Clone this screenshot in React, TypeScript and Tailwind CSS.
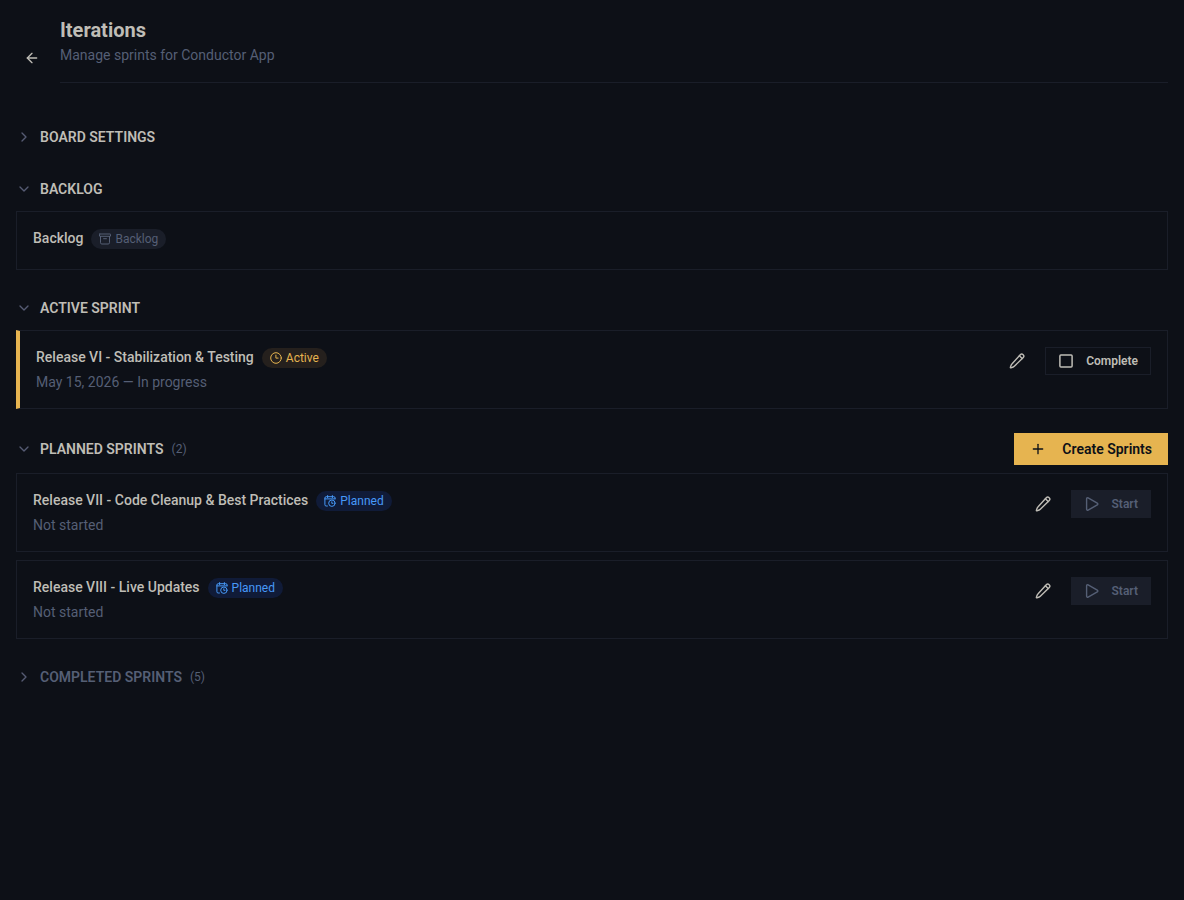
import { useState, type ReactNode } from 'react';
import { ArrowLeft, ChevronDown, ChevronRight, Plus } from 'lucide-react';

const stroke = { fill: 'none', stroke: 'currentColor', strokeLinecap: 'round', strokeLinejoin: 'round' } as const;

function PencilIcon() {
  return (
    <svg viewBox="0 0 16 16" className="size-4" {...stroke} strokeWidth={1.4} aria-hidden="true">
      <path d="M11.5 1.6a1.7 1.7 0 0 1 2.4 0l.4.4a1.7 1.7 0 0 1 0 2.4l-9 8.9a3 3 0 0 1-1.1.7l-2.3.8a.4.4 0 0 1-.5-.5l.8-2.3a3 3 0 0 1 .7-1.1z" />
      <path d="m10.4 2.8 2.8 2.8" />
    </svg>
  );
}

function SquareIcon() {
  return (
    <svg viewBox="0 0 16 16" className="size-4" {...stroke} strokeWidth={1.5} aria-hidden="true">
      <rect x="1.9" y="1.9" width="12.2" height="12.2" rx="1" />
    </svg>
  );
}

function PlayIcon() {
  return (
    <svg viewBox="0 0 16 16" className="size-4" {...stroke} strokeWidth={1.4} aria-hidden="true">
      <path d="M2.6 2.7c0-.8.8-1.2 1.5-.9l9.2 5.3c.7.4.7 1.4 0 1.8l-9.2 5.3c-.7.3-1.5-.1-1.5-.9z" />
    </svg>
  );
}

function ArchiveIcon() {
  return (
    <svg viewBox="0 0 12 12" className="size-3" {...stroke} strokeWidth={1} aria-hidden="true">
      <rect x=".5" y="1" width="11" height="2.3" rx=".3" />
      <path d="M1.5 3.4v6.3c0 .8.5 1.3 1.3 1.3h6.4c.8 0 1.3-.5 1.3-1.3V3.4M4.6 5.7h2.8" />
    </svg>
  );
}

function ClockIcon() {
  return (
    <svg viewBox="0 0 12 12" className="size-3" {...stroke} strokeWidth={1} aria-hidden="true">
      <circle cx="6" cy="6" r="5.3" />
      <path d="M5.9 3.1v3h2.2" />
    </svg>
  );
}

function CalendarClockIcon() {
  return (
    <svg viewBox="0 0 12 12" className="size-3" {...stroke} strokeWidth={1} aria-hidden="true">
      <path d="M3.6.6v2M8.4.6v2M3.4 11H2.2A1.3 1.3 0 0 1 .9 9.7V3a1.3 1.3 0 0 1 1.3-1.3h7.6A1.3 1.3 0 0 1 11.1 3v.8M.9 3.9h10.2" />
      <circle cx="7.9" cy="8.2" r="3.2" />
      <path d="M7.8 6.8v1.5H9" />
    </svg>
  );
}

const badgeStyles = {
  backlog: 'bg-[#1a1e29] text-[#555f75]',
  active: 'bg-[#25201d] text-[#e6b450]',
  planned: 'bg-[#101b38] text-[#4799f8]',
};

function Badge({ kind, icon, children }: { kind: keyof typeof badgeStyles; icon: ReactNode; children: ReactNode }) {
  return (
    <span className={`flex h-5 items-center gap-1 self-end rounded-full px-2 text-xs ${badgeStyles[kind]}`}>
      {icon}
      {children}
    </span>
  );
}

function Section({
  title,
  count,
  initialOpen = false,
  muted = false,
  action,
  children,
}: {
  title: string;
  count?: number;
  initialOpen?: boolean;
  muted?: boolean;
  action?: ReactNode;
  children?: ReactNode;
}) {
  const [open, setOpen] = useState(initialOpen);
  const Chevron = open ? ChevronDown : ChevronRight;
  return (
    <section className="flex flex-col gap-2">
      <div className="flex items-center justify-between">
        <h2>
          <button
            type="button"
            aria-expanded={open}
            onClick={() => setOpen(!open)}
            className="flex h-7 items-center gap-2 text-sm"
          >
            <Chevron className="size-4 text-[#565b73]" strokeWidth={2} />
            <span className={`font-semibold uppercase ${muted ? 'text-[#555f75]' : 'text-[#bfbdb6]'}`}>{title}</span>
            {count !== undefined && <span className="text-xs text-[#555f75]">({count})</span>}
          </button>
        </h2>
        {action}
      </div>
      {open && children}
    </section>
  );
}

function SprintCard({
  name,
  badge,
  status,
  actions,
  active = false,
}: {
  name: string;
  badge: ReactNode;
  status?: string;
  actions?: ReactNode;
  active?: boolean;
}) {
  return (
    <article
      className={`flex items-start justify-between border border-[#1a1e29] p-4 ${active ? 'border-l-4 border-l-[#e6b450]' : ''}`}
    >
      <div className="flex flex-col">
        <div className="mb-1 flex h-[21px] items-start gap-2">
          <h3 className="text-sm font-medium text-[#bfbdb6]">{name}</h3>
          {badge}
        </div>
        {status && <p className="text-sm text-[#555f75]">{status}</p>}
      </div>
      {actions}
    </article>
  );
}

function EditButton({ name }: { name: string }) {
  return (
    <button type="button" aria-label={`Edit ${name}`} className="flex h-7 w-8 items-center justify-center text-[#bfbdb6]">
      <PencilIcon />
    </button>
  );
}

const planned = ['Release VII - Code Cleanup & Best Practices', 'Release VIII - Live Updates'];

export default function App() {
  return (
    <div className="min-h-screen bg-[#0d1017] font-[Roboto,sans-serif] text-[#bfbdb6]">
      <main className="flex flex-col gap-6 px-4 py-4">
        <header className="flex items-center gap-3">
          <button type="button" aria-label="Back" className="flex size-8 items-center justify-center">
            <ArrowLeft className="size-4" />
          </button>
          <div className="mb-4 grow border-b border-[#1a1e29] pb-4">
            <h1 className="text-xl font-bold">Iterations</h1>
            <p className="text-sm leading-[22px] text-[#555f75]">Manage sprints for Conductor App</p>
          </div>
        </header>
        <Section title="Board Settings" />
        <Section title="Backlog" initialOpen>
          <SprintCard name="Backlog" badge={<Badge kind="backlog" icon={<ArchiveIcon />}>Backlog</Badge>} />
        </Section>
        <Section title="Active Sprint" initialOpen>
          <SprintCard
            active
            name="Release VI - Stabilization & Testing"
            badge={<Badge kind="active" icon={<ClockIcon />}>Active</Badge>}
            status="May 15, 2026 — In progress"
            actions={
              <div className="flex gap-3">
                <EditButton name="Release VI" />
                <button type="button" className="flex h-7 items-center gap-3 border border-[#1a1e29] px-3 text-xs font-semibold">
                  <SquareIcon />
                  Complete
                </button>
              </div>
            }
          />
        </Section>
        <Section
          title="Planned Sprints"
          count={2}
          initialOpen
          action={
            <button type="button" className="flex h-8 items-center gap-4 bg-[#e6b450] px-4 text-sm font-semibold text-[#0d1017]">
              <Plus className="size-4" strokeWidth={2} />
              Create Sprints
            </button>
          }
        >
          {planned.map((name) => (
            <SprintCard
              key={name}
              name={name}
              badge={<Badge kind="planned" icon={<CalendarClockIcon />}>Planned</Badge>}
              status="Not started"
              actions={
                <div className="flex gap-3">
                  <EditButton name={name} />
                  <button type="button" disabled className="flex h-7 items-center gap-3 border border-[#1a1e29] bg-[#1a1e29] px-3 text-xs font-semibold text-[#555f75]">
                    <PlayIcon />
                    Start
                  </button>
                </div>
              }
            />
          ))}
        </Section>
        <Section title="Completed Sprints" count={5} muted />
      </main>
    </div>
  );
}
